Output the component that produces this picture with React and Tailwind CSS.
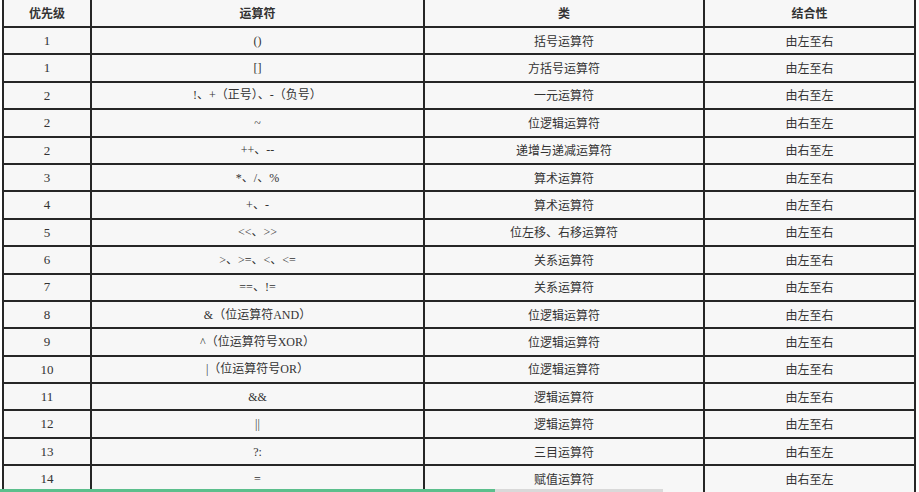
import React from "react";

const rows = [
  ["1", "()", "括号运算符", "由左至右"],
  ["1", "[]", "方括号运算符", "由左至右"],
  ["2", "!、+（正号）、-（负号）", "一元运算符", "由右至左"],
  ["2", "~", "位逻辑运算符", "由右至左"],
  ["2", "++、--", "递增与递减运算符", "由右至左"],
  ["3", "*、/、%", "算术运算符", "由左至右"],
  ["4", "+、-", "算术运算符", "由左至右"],
  ["5", "<<、>>", "位左移、右移运算符", "由左至右"],
  ["6", ">、>=、<、<=", "关系运算符", "由左至右"],
  ["7", "==、!=", "关系运算符", "由左至右"],
  ["8", "&（位运算符AND）", "位逻辑运算符", "由左至右"],
  ["9", "^（位运算符号XOR）", "位逻辑运算符", "由左至右"],
  ["10", "|（位运算符号OR）", "位逻辑运算符", "由左至右"],
  ["11", "&&", "逻辑运算符", "由左至右"],
  ["12", "||", "逻辑运算符", "由左至右"],
  ["13", "?:", "三目运算符", "由右至左"],
  ["14", "=", "赋值运算符", "由右至左"],
];

const serif = { fontFamily: '"Liberation Serif", "Noto Sans CJK SC", serif' };
const sans = { fontFamily: '"Noto Sans CJK SC", "Noto Sans", sans-serif' };

export default function App() {
  return (
    <div className="relative w-[919px] h-[492px] overflow-hidden bg-white">
      <div className="ml-[2px] w-[914px] border-l-2 border-r-2 border-[#262626] bg-[#f7f7f7] text-[#333333]">
        <div className="grid grid-cols-[88px_333px_280px_209px] h-[28px] border-b-2 border-[#262626] text-[12px] font-bold" style={sans}>
          <div className="flex items-center justify-center border-r-2 border-[#262626]">优先级</div>
          <div className="flex items-center justify-center border-r-2 border-[#262626]">运算符</div>
          <div className="flex items-center justify-center border-r-2 border-[#262626]">类</div>
          <div className="flex items-center justify-center">结合性</div>
        </div>
        {rows.map((r, i) => (
          <div key={i} className="grid grid-cols-[88px_333px_280px_209px] h-[27.4px] border-b-2 border-[#262626] text-[12px]">
            <div className="flex items-center justify-center border-r-2 border-[#262626] text-[13px]" style={serif}>{r[0]}</div>
            <div className="flex items-center justify-center border-r-2 border-[#262626]" style={serif}>{r[1]}</div>
            <div className="flex items-center justify-center border-r-2 border-[#262626]" style={sans}>{r[2]}</div>
            <div className="flex items-center justify-center" style={sans}>{r[3]}</div>
          </div>
        ))}
      </div>
      <div className="absolute left-0 bottom-0 w-[663px] h-[3px] bg-[#d9d9d9]">
        <div className="h-full w-[495px] bg-[#5cbf8c]" />
      </div>
    </div>
  );
}
